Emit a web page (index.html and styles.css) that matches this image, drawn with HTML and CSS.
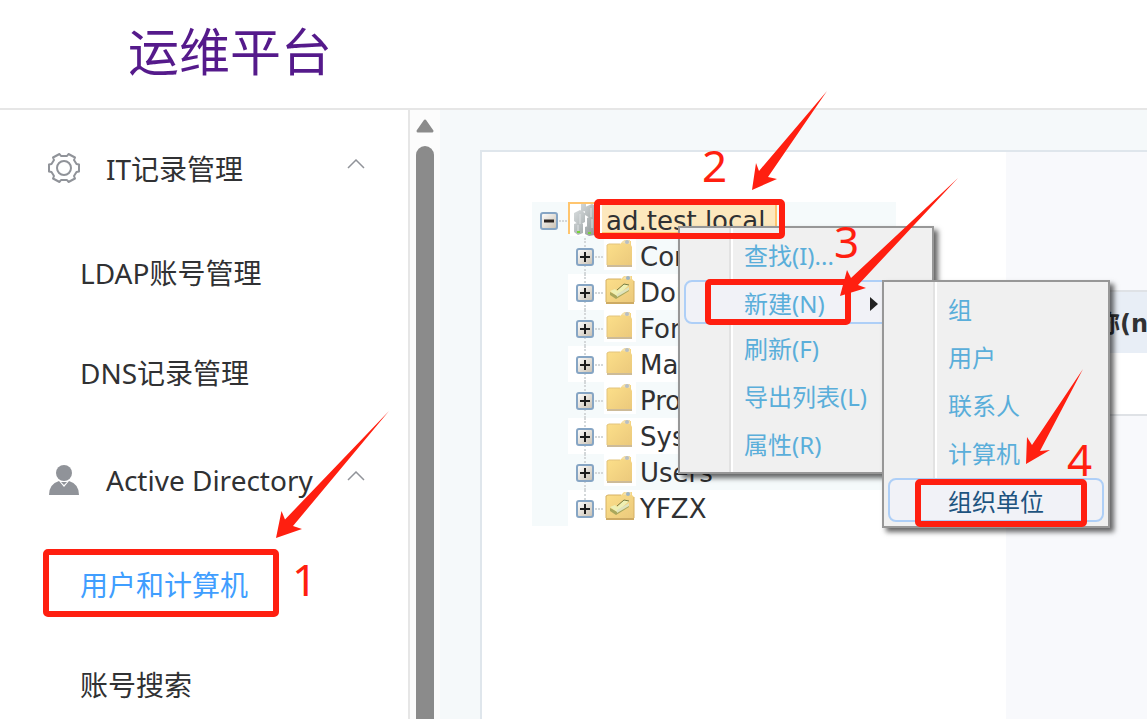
FILE: index.html
```html
<!DOCTYPE html>
<html lang="zh-CN">
<head>
<meta charset="utf-8">
<title>运维平台</title>
<link rel="stylesheet" href="styles.css">
</head>
<body>
<svg class="defs" aria-hidden="true">
  <defs>
    <linearGradient id="tile" x1="0" y1="0" x2="1" y2="1"><stop offset="0" stop-color="#ffffff"/><stop offset="1" stop-color="#c8bfb0"/></linearGradient>
    <linearGradient id="paper" x1="0" y1="0" x2="1" y2="1"><stop offset="0" stop-color="#fde08a"/><stop offset="1" stop-color="#ebc97c"/></linearGradient>
    <linearGradient id="metal" x1="0" y1="0" x2="1" y2="1"><stop offset="0" stop-color="#dfe3e4"/><stop offset="1" stop-color="#8d9596"/></linearGradient>
    <symbol id="plus" viewBox="0 0 18 18"><rect x="1" y="1" width="16" height="16" rx="2" fill="url(#tile)" stroke="#86a5c4" stroke-width="2"/><path d="M4 9h10M9 4v10" stroke="#1c1c1c" stroke-width="2"/></symbol>
    <symbol id="minus" viewBox="0 0 18 18"><rect x="1" y="1" width="16" height="16" rx="2" fill="url(#tile)" stroke="#86a5c4" stroke-width="2"/><path d="M4 9h10" stroke="#2c2420" stroke-width="3"/></symbol>
    <symbol id="folder" viewBox="0 0 32 32"><path d="M3 28h25" stroke="#cdbb98" stroke-width="2"/><path d="M3 7l2-1h11l3-3h8v4l1 2v18H3z" fill="url(#paper)"/><path d="M3 27V7l2-1h11" fill="none" stroke="#e3c47c"/><path d="M18 5l2-3h6v4z" fill="#f3dfaa"/><circle cx="23" cy="4" r="2" fill="#b8bfc4"/></symbol>
    <symbol id="unit" viewBox="0 0 32 32"><path d="M2 29h28" stroke="#cdaa63" stroke-width="2"/><path d="M2 6l2-1h13l3-3h8v3l2 2v21H2z" fill="url(#paper)"/><path d="M2 28V6l2-1h13M30 7v21" fill="none" stroke="#d6b164"/><path d="M19 5l2-3h6v3z" fill="#f3dfaa"/><circle cx="24" cy="4" r="2" fill="#9eb4c4"/><path d="M6 18l6 3 13-7v3l-13 8-6-4z" fill="#a9a75c"/><path d="M6 17l5-2 2 2 7-7 5 1-12 11z" fill="#eef0b4"/><path d="M13 20l12-7v3l-12 7z" fill="#dfe3bd"/><path d="M13 16l7-6 5 1" fill="none" stroke="#767b40"/></symbol>
  </defs>
</svg>

<header class="topbar"><a class="brand" href="#">运维平台</a></header>

<div class="shell">
  <nav class="sidebar">
    <button class="group" type="button">
      <svg class="group-icon" viewBox="0 0 32 32" fill="none" stroke="#909399" stroke-width="2" stroke-linejoin="round"><path d="M11.500 2L13 4H19L20.500 2L27 5.500L26 8L28.500 12L31 12.500V19.500L28.500 20L26 24L27 26.500L20.500 30L19 28H13L11.500 30L5 26.500L6 24L3.500 20L1 19.500V12.500L3.500 12L6 8L5 5.500z"/><circle cx="16" cy="16" r="7"/></svg>
      <span>IT记录管理</span>
      <svg class="chevron" viewBox="0 0 18 10"><path d="M1 9l8-8 8 8" fill="none" stroke="#909399" stroke-width="1.500"/></svg>
    </button>
    <a class="item" href="#">LDAP账号管理</a>
    <a class="item" href="#">DNS记录管理</a>
    <button class="group" type="button">
      <svg class="group-icon" viewBox="0 0 32 32" fill="#909399"><circle cx="16" cy="9" r="8"/><path d="M1 31Q1 20 11 17L16 23L21 17Q31 20 31 31z"/><path d="M13 18h6l-3 3z"/></svg>
      <span>Active Directory</span>
      <svg class="chevron" viewBox="0 0 18 10"><path d="M1 9l8-8 8 8" fill="none" stroke="#909399" stroke-width="1.500"/></svg>
    </button>
    <a class="item active" href="#">用户和计算机</a>
    <a class="item" href="#">账号搜索</a>
  </nav>

  <div class="scroll">
    <svg class="scroll-up" viewBox="0 0 18 16"><path d="M9 3L16 13H2z" fill="#8b8b8b" stroke="#8b8b8b" stroke-width="3" stroke-linejoin="round"/></svg>
    <div class="thumb"></div>
  </div>

  <main class="content">
    <div class="panel">
      <section class="tree-pane">
        <div class="tree">
          <div class="root">
            <span class="toggle"><svg><use href="#minus"/></svg></span>
            <span class="root-node">
              <svg class="node-icon" viewBox="0 0 32 32"><path fill="#fff" d="M0 0h32v32H0z"/><g fill="url(#metal)"><path d="M11 0l5-1v8l-5 1zM15 3l7-3 4 2v9l-6 3-5-3zM4 9l6-3 5 3v9l-6 3-5-4zM17 14l6-3 4 2v9l-5 3-5-3zM4 20l6-2 3 2v9l-5 2-4-3zM15 23l6-2 4 2v8l-6 1-4-2z"/></g><path d="M10 10v10M21 4v9M22 15v9M8 21v8" stroke="#dfe3e4"/><path d="M7 28h3M18 29h3" stroke="#75d33b" stroke-width="2"/></svg>
              <span>ad.test.local</span>
            </span>
          </div>
          <ul class="branch">
            <li><span class="toggle"><svg><use href="#plus"/></svg></span><svg class="node-icon"><use href="#folder"/></svg><span>Com</span></li>
            <li><span class="toggle"><svg><use href="#plus"/></svg></span><svg class="node-icon"><use href="#unit"/></svg><span>Dom</span></li>
            <li><span class="toggle"><svg><use href="#plus"/></svg></span><svg class="node-icon"><use href="#folder"/></svg><span>Fore</span></li>
            <li><span class="toggle"><svg><use href="#plus"/></svg></span><svg class="node-icon"><use href="#folder"/></svg><span>Man</span></li>
            <li><span class="toggle"><svg><use href="#plus"/></svg></span><svg class="node-icon"><use href="#folder"/></svg><span>Prog</span></li>
            <li><span class="toggle"><svg><use href="#plus"/></svg></span><svg class="node-icon"><use href="#folder"/></svg><span>Syst</span></li>
            <li><span class="toggle"><svg><use href="#plus"/></svg></span><svg class="node-icon"><use href="#folder"/></svg><span>Users</span></li>
            <li><span class="toggle"><svg><use href="#plus"/></svg></span><svg class="node-icon"><use href="#unit"/></svg><span>YFZX</span></li>
          </ul>
        </div>
      </section>
      <section class="list-pane">
        <table class="list">
          <thead><tr><th>名称(n</th></tr></thead>
          <tbody><tr><td></td></tr></tbody>
        </table>
      </section>
    </div>
  </main>
</div>

<div class="menu menu-main">
  <button type="button">查找(I)...</button>
  <button type="button" class="on">新建(N)<svg class="more" viewBox="0 0 8 14"><path d="M0 0l8 7-8 7z" fill="#222"/></svg></button>
  <button type="button">刷新(F)</button>
  <button type="button">导出列表(L)</button>
  <button type="button">属性(R)</button>
</div>
<div class="menu menu-sub">
  <button type="button">组</button>
  <button type="button">用户</button>
  <button type="button">联系人</button>
  <button type="button">计算机</button>
  <button type="button" class="on strong">组织单位</button>
</div>

<svg class="marks">
  <g class="frames">
    <rect x="46" y="552" width="230" height="62" rx="2"/>
    <rect x="597" y="202" width="185" height="34" rx="2"/>
    <rect x="708" y="282" width="140" height="40" rx="2"/>
    <rect x="918" y="482" width="166" height="42" rx="2"/>
  </g>
  <g class="arrows">
    <path d="M389 411L285 519.500L281.500 511L276 538L302 529L293 526z"/>
    <path d="M827 91L759 171L756 163L752 190L777 179L768 177z"/>
    <path d="M958 178L851 278L847 270L840 296L866 288L858 285z"/>
    <path d="M1083 369L1032 445L1027 437L1026 464L1050 450L1040 451z"/>
  </g>
  <g class="digits">
    <text x="292" y="596">1</text>
    <text x="702" y="182">2</text>
    <text x="834" y="258">3</text>
    <text x="1067" y="476">4</text>
  </g>
</svg>
</body>
</html>
```

FILE: styles.css
```css
* { box-sizing: border-box; }

body {
  margin: 0;
  height: 100vh;
  overflow: hidden;
  display: flex;
  flex-direction: column;
  position: relative;
  background: #fff;
  color: #303133;
  font-family: "Noto Sans", "Noto Sans CJK SC", sans-serif;
  font-size: 28px;
}

button { border: 0; background: none; font: inherit; color: inherit; text-align: left; cursor: pointer; }
a { text-decoration: none; color: inherit; }
svg { display: block; flex: none; }
.defs { position: absolute; width: 0; height: 0; }

.topbar {
  flex: none;
  height: 110px;
  padding: 0 128px 10px;
  display: flex;
  align-items: center;
  border-bottom: 2px solid #e6e6e6;
}
.brand { font-family: "Noto Sans CJK SC", sans-serif; font-size: 51px; line-height: 60px; color: #551a8b; }

.shell { flex: 1; min-height: 0; display: flex; }

.sidebar {
  flex: none;
  width: 410px;
  padding-top: 2px;
  overflow: hidden;
  border-right: 2px solid #e6e6e6;
}
.group {
  width: 100%;
  height: 112px;
  padding: 0 42px 0 48px;
  display: flex;
  align-items: center;
  gap: 26px;
  white-space: nowrap;
}
.group-icon { width: 32px; height: 32px; }
.chevron { width: 20px; height: 10px; margin: 0 0 8px auto; }
.item { display: flex; align-items: center; height: 100px; padding: 0 0 4px 80px; }
.item.active { color: #409eff; }

.scroll {
  flex: none;
  width: 30px;
  padding: 8px 6px 0;
  display: flex;
  flex-direction: column;
  gap: 12px;
  background: #fcfcfc;
}
.scroll-up { width: 18px; height: 16px; }
.thumb { flex: 1; border-radius: 9px 9px 0 0; background: #8b8b8b; }

.content { flex: 1; min-width: 0; display: flex; padding: 40px 0 0 40px; background: #f5f9fa; }
.panel { flex: 1; min-width: 0; display: flex; border: 2px solid #dfe6ec; border-width: 2px 0 0 2px; }
.tree-pane { flex: none; width: 524px; padding: 50px; background: #fff; }
.list-pane { flex: 1; min-width: 0; overflow: hidden; padding-top: 138px; background: #f8f9fc; }

.tree { width: 364px; font-family: "DejaVu Sans", sans-serif; font-size: 26px; line-height: 38px; background: #f5fafb; }
.root { display: flex; height: 36px; }
.toggle { flex: none; width: 36px; height: 36px; padding: 10px 0 0 8px; position: relative; }
.toggle svg { width: 18px; height: 18px; position: relative; }
.toggle::after { content: ""; position: absolute; left: 27px; top: 18px; width: 8px; border-top: 2px dotted #d4d8da; }
.root-node {
  display: flex;
  gap: 4px;
  height: 32px;
  padding-right: 10px;
  line-height: 34px;
  border: 2px solid #ffc56e;
  background: #fde8bd;
}
.node-icon { width: 32px; height: 32px; background: #fff; }
.branch { margin: 0; padding: 0 0 0 36px; list-style: none; }
.branch li { display: flex; height: 36px; gap: 4px; }
.branch li .toggle { margin-right: -4px; }
.branch li .toggle::before { content: ""; position: absolute; left: 16px; top: 0; height: 36px; border-left: 2px dotted #d4d8da; }
.branch li:last-child .toggle::before { height: 18px; }
.branch li:nth-child(even) { background: #fff; }

.list { width: 100%; border-collapse: collapse; border-top: 2px solid #dfe2e6; border-bottom: 2px solid #dfe2e6; }
.list th { height: 62px; padding: 0 0 2px 66px; font-family: "DejaVu Sans", "Noto Sans CJK SC", sans-serif; font-size: 24px; text-align: left; white-space: nowrap; background: #e8eef6; }
.list td { height: 62px; background: #fff; }

.menu {
  position: absolute;
  padding: 2px;
  display: flex;
  flex-direction: column;
  border: 2px solid #979797;
  background: linear-gradient(90deg, transparent 49px, #e2e2e2 49px, #e2e2e2 51px, #fff 51px, #fff 53px, transparent 53px) #f0f0f0;
  box-shadow: 4px 4px 5px rgba(0, 0, 0, 0.6);
  font-size: 24px;
}
.menu button {
  display: flex;
  align-items: center;
  height: 44px;
  margin: 2px;
  padding: 0 0 0 58px;
  border: 2px solid transparent;
  border-radius: 8px;
  color: #5aaeda;
  white-space: nowrap;
}
.menu .on { border-color: #aecff7; background: #f1f2f7; }
.menu .strong { color: #1e5480; }
.menu-main { left: 678px; top: 226px; width: 256px; }
.menu-main .on ~ button { padding-bottom: 6px; }
.menu-sub { left: 882px; top: 280px; width: 228px; }
.more { width: 8px; height: 14px; margin: 4px 48px 0 auto; }

.marks { position: absolute; inset: 0; width: 100%; height: 100%; pointer-events: none; }
.frames { fill: none; stroke: #ff1f10; stroke-width: 6px; }
.arrows { fill: #ff1f10; }
.digits { fill: #ff1f10; font-size: 44px; }
```
